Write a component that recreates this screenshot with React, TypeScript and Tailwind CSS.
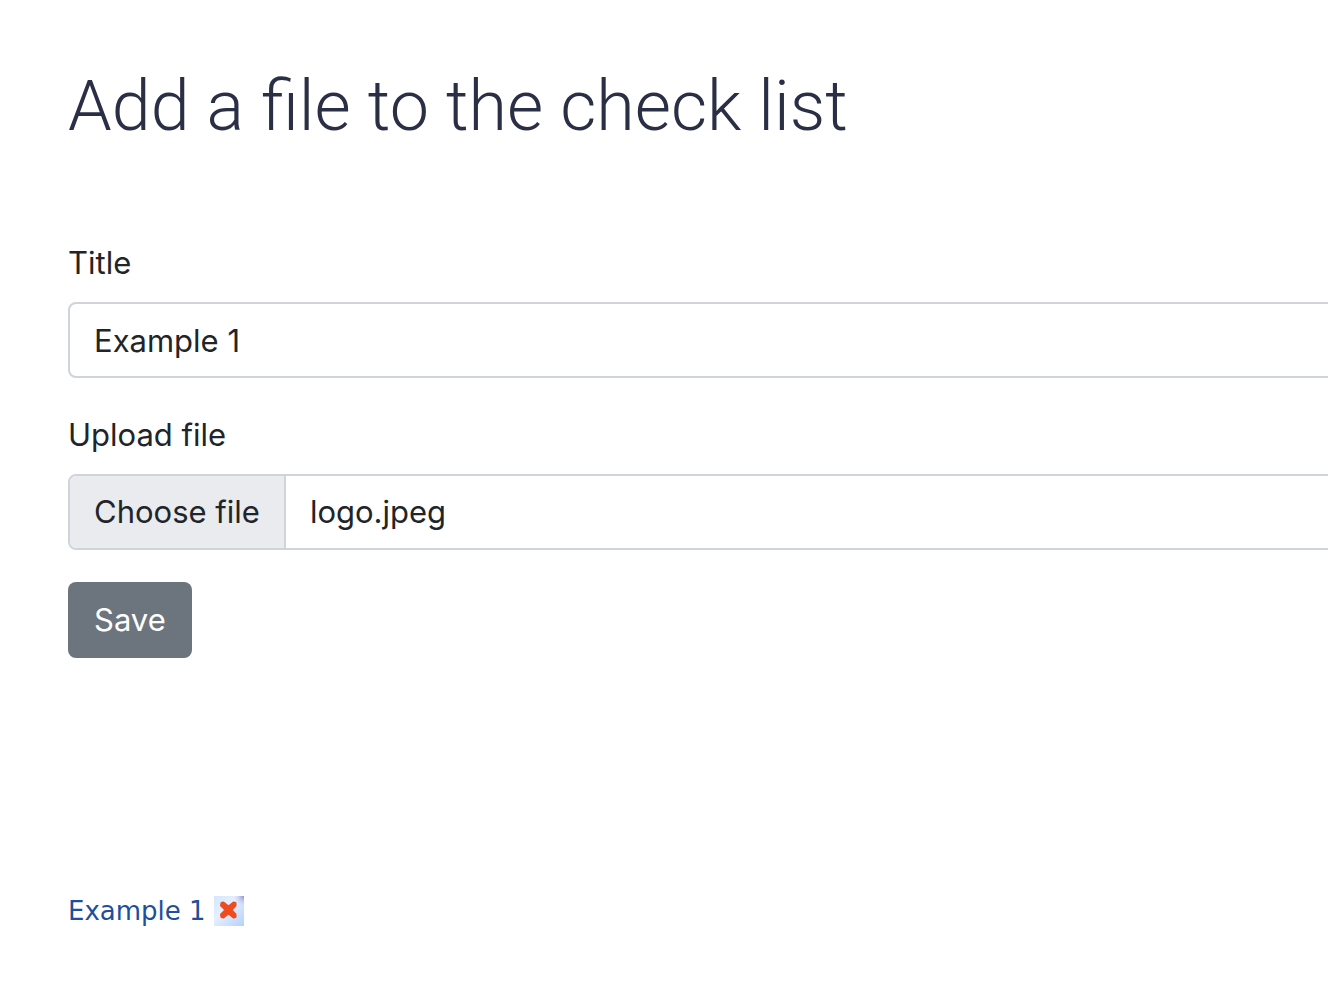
import { useRef, useState } from "react";

function RemoveIcon() {
  return (
    <svg viewBox="0 0 30 30" className="size-[30px]" aria-hidden="true">
      <defs>
        <linearGradient id="tile" x1="0" y1="0" x2="1" y2="1">
          <stop offset="0" stopColor="#d3e7fc" />
          <stop offset="0.4" stopColor="#e6effd" />
          <stop offset="1" stopColor="#b5d1fa" />
        </linearGradient>
        <radialGradient id="corner" cx="1" cy="0" r="0.35">
          <stop offset="0" stopColor="#8c8fd8" />
          <stop offset="1" stopColor="#c3cdf5" stopOpacity="0" />
        </radialGradient>
      </defs>
      <rect width="30" height="30" fill="url(#tile)" />
      <rect width="30" height="30" fill="url(#corner)" />
      <path
        d="M7.500 7 L9.500 6.500 L14.500 10.500 L19.500 6.500 L21.500 7 L21.500 9.500 L17.500 14 L21.500 18.500 L21.500 21 L19.500 21.500 L14.500 17.500 L9.500 21.500 L7.500 21 L7 18.500 L11.500 14 L7 9.500 Z"
        fill="#ee4b1f"
        stroke="#ee4b1f"
        strokeWidth="2"
        strokeLinejoin="round"
      />
    </svg>
  );
}

export default function App() {
  const [title, setTitle] = useState("Example 1");
  const [fileName, setFileName] = useState("logo.jpeg");
  const picker = useRef<HTMLInputElement>(null);

  return (
    <main className="min-h-screen overflow-hidden bg-white pt-[66px] pl-[68px] font-['Inter','Liberation_Sans',sans-serif] text-[31px] leading-[48px] text-[#212529]">
      <h1 className="font-['Roboto',sans-serif] text-[70px] leading-20 font-light text-[#2b2f45]">
        Add a file to the check list
      </h1>
      <form className="mt-[92px]" onSubmit={(e) => e.preventDefault()}>
        <label htmlFor="title" className="block leading-[50px]">Title</label>
        <input
          id="title"
          value={title}
          onChange={(e) => setTitle(e.target.value)}
          className="mt-[14px] block h-[76px] w-[calc(100%+24px)] rounded-lg border-2 border-[#ced4da] px-6"
        />
        <label htmlFor="upload" className="mt-8 block leading-[50px]">Upload file</label>
        <div className="mt-[14px] flex h-[76px] w-[calc(100%+24px)] overflow-hidden rounded-lg border-2 border-[#ced4da]">
          <button
            id="upload"
            type="button"
            onClick={() => picker.current?.click()}
            className="border-r-2 border-[#ced4da] bg-[#e9ebef] px-6"
          >
            Choose file
          </button>
          <output htmlFor="upload" className="self-center px-6">{fileName}</output>
          <input
            ref={picker}
            type="file"
            aria-label="Upload file"
            className="hidden"
            onChange={(e) => setFileName(e.target.files?.[0]?.name ?? fileName)}
          />
        </div>
        <button type="submit" className="mt-8 block h-[76px] rounded-lg bg-[#6c757d] px-[26px] text-white">
          Save
        </button>
      </form>
      <div className="mt-[228px] flex items-center gap-2 font-['DejaVu_Sans',sans-serif] text-[26px] leading-[50px]">
        <a href="#example-1" className="text-[#1d4f9c]">Example 1</a>
        <button type="button" aria-label="Remove Example 1">
          <RemoveIcon />
        </button>
      </div>
    </main>
  );
}
